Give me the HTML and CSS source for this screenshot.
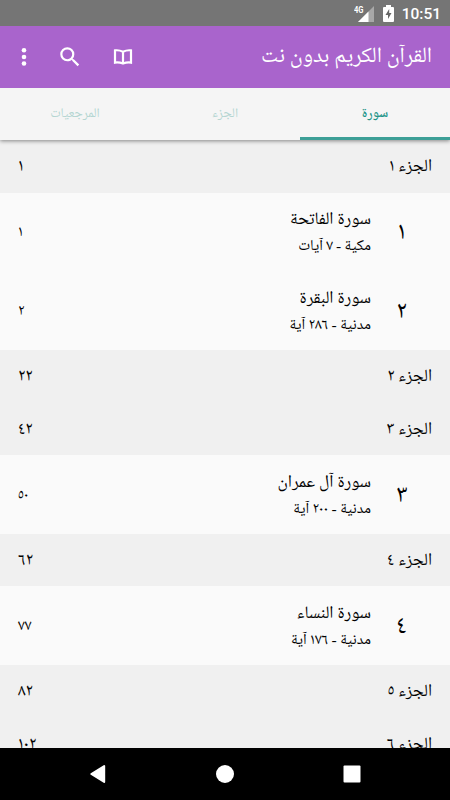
FILE: index.html
```
<!DOCTYPE html>
<html lang="ar" dir="rtl">
<head>
    <meta charset="UTF-8">
    <meta name="viewport" content="width=device-width, initial-scale=1.0">
    <title>القرآن الكريم بدون نت</title>
    <link rel="stylesheet" href="styles.css">
</head>
<body>
    <div class="status-bar" dir="ltr">
        <svg class="signal" width="21" height="18" viewBox="0 0 21 18">
            <path d="M20 1V17H4Z" fill="#a8a8a8"/>
            <path d="M14.5 6.5V17H4Z" fill="#fff"/>
            <text class="network" x="0" y="8" textLength="9.5" lengthAdjust="spacingAndGlyphs">4G</text>
        </svg>
        <svg class="battery" width="11" height="17" viewBox="0 0 11 17">
            <path d="M3 0H8V2H10Q11 2 11 3V16Q11 17 10 17H1Q0 17 0 16V3Q0 2 1 2H3Z" fill="#fff"/>
            <path d="M6.2 4L2.5 10H5V14L8.5 8H6.2Z" fill="#666"/>
        </svg>
        <span class="clock">10:51</span>
    </div>

    <header class="toolbar">
        <h1 class="title">القرآن الكريم بدون نت</h1>
        <div class="actions" dir="ltr">
            <svg class="icon-more" width="6" height="20" viewBox="0 0 6 20">
                <circle cx="3" cy="3.3" r="2.3"/>
                <circle cx="3" cy="10" r="2.3"/>
                <circle cx="3" cy="16.5" r="2.3"/>
            </svg>
            <svg class="icon-search" width="26" height="26" viewBox="0 0 24 24">
                <path d="M15.5 14h-.79l-.28-.27A6.47 6.47 0 0 0 16 9.5 6.5 6.5 0 1 0 9.5 16c1.61 0 3.09-.59 4.23-1.57l.27.28v.79l5 4.99L20.49 19l-4.99-5zm-6 0a4.5 4.5 0 1 1 0-9 4.5 4.5 0 0 1 0 9z"/>
            </svg>
            <svg class="icon-book" width="20" height="18" viewBox="0 0 20 18">
                <path d="M2 2.4Q6 1.8 10 3.8Q14 1.8 18 2.4V14.6Q14 14 10 15.6Q6 14 2 14.6ZM10 4V15"/>
            </svg>
        </div>
    </header>

    <nav class="tabs">
        <div class="tab active">سورة</div>
        <div class="tab">الجزء</div>
        <div class="tab">المرجعيات</div>
    </nav>

    <main class="list">
        <div class="juz"><span>الجزء ١</span><span class="page">١</span></div>
        <div class="surah">
            <span class="number">١</span>
            <div class="info">
                <div class="name">سورة الفاتحة</div>
                <div class="meta">مكية - ٧ آيات</div>
            </div>
            <span class="page">١</span>
        </div>
        <div class="surah">
            <span class="number">٢</span>
            <div class="info">
                <div class="name">سورة البقرة</div>
                <div class="meta">مدنية - ٢٨٦ آية</div>
            </div>
            <span class="page">٢</span>
        </div>
        <div class="juz"><span>الجزء ٢</span><span class="page">٢٢</span></div>
        <div class="juz"><span>الجزء ٣</span><span class="page">٤٢</span></div>
        <div class="surah">
            <span class="number">٣</span>
            <div class="info">
                <div class="name">سورة آل عمران</div>
                <div class="meta">مدنية - ٢٠٠ آية</div>
            </div>
            <span class="page">٥٠</span>
        </div>
        <div class="juz"><span>الجزء ٤</span><span class="page">٦٢</span></div>
        <div class="surah">
            <span class="number">٤</span>
            <div class="info">
                <div class="name">سورة النساء</div>
                <div class="meta">مدنية - ١٧٦ آية</div>
            </div>
            <span class="page">٧٧</span>
        </div>
        <div class="juz"><span>الجزء ٥</span><span class="page">٨٢</span></div>
        <div class="juz"><span>الجزء ٦</span><span class="page">١٠٢</span></div>
    </main>

    <footer class="nav-bar" dir="ltr">
        <svg width="18" height="20" viewBox="0 0 18 20"><path d="M2.3 10L15.2 2V18Z" stroke="#fff" stroke-width="2" stroke-linejoin="round"/></svg>
        <svg width="18" height="18" viewBox="0 0 18 18"><circle cx="9" cy="9" r="9"/></svg>
        <svg width="18" height="18" viewBox="0 0 18 18"><rect x=".5" y=".5" width="17" height="17" rx="1"/></svg>
    </footer>
</body>
</html>
```
FILE: styles.css
```
* {
    box-sizing: border-box;
}
body {
    margin: 0;
    width: 450px;
    height: 800px;
    overflow: hidden;
    display: flex;
    flex-direction: column;
    font-family: "Noto Naskh Arabic UI", "Noto Naskh Arabic", "Noto Sans Arabic", "DejaVu Sans", sans-serif;
    color: #000;
    background: #fafafa;
}
.status-bar {
    flex: none;
    height: 26px;
    padding-right: 9px;
    display: flex;
    align-items: center;
    justify-content: flex-end;
    background: #757575;
    color: #fff;
}
.network {
    font: bold 9.5px Roboto, sans-serif;
    fill: #fff;
}
.signal {
    margin: 1px 8px 0 0;
}
.battery {
    margin-right: 8px;
}
.clock {
    font: 500 15.5px/26px Roboto, sans-serif;
    padding-top: 2px;
}
.toolbar {
    flex: none;
    height: 61.5px;
    padding: 0 18px 0 21px;
    display: flex;
    align-items: center;
    justify-content: space-between;
    background: #a964cc;
    color: #fff;
    position: relative;
    z-index: 1;
}
.title {
    margin: 0;
    font-size: 21.9px;
    font-weight: 400;
    line-height: 30px;
}
.actions {
    display: flex;
    align-items: center;
    fill: #fff;
}
.icon-search {
    margin: 0 29.5px 0 30px;
}
.icon-book {
    fill: none;
    stroke: #fff;
    stroke-width: 2.2;
}
.tabs {
    flex: none;
    height: 52.5px;
    display: flex;
    position: relative;
    background: #f5f5f5;
    box-shadow: 0 1px 4px rgba(0, 0, 0, 0.45);
}
.tab {
    flex: 1;
    display: flex;
    align-items: center;
    justify-content: center;
    border-bottom: 3px solid transparent;
    padding-top: 3px;
    font-size: 13.4px;
    color: #b4d6d2;
}
.tab.active {
    color: #229488;
    font-weight: 600;
    border-bottom-color: #3d9f97;
}
.list {
    flex: 1;
    min-height: 0;
    overflow: hidden;
}
.juz {
    height: 52.5px;
    padding: 1px 18px 0;
    display: flex;
    align-items: center;
    justify-content: space-between;
    background: #f0f0f0;
    font-size: 17.3px;
}
.surah {
    height: 78.75px;
    padding: 1px 18px 0;
    display: flex;
    align-items: center;
}
.number {
    width: 61px;
    text-align: center;
    font-size: 25px;
}
.info {
    flex: 1;
    padding-top: 1px;
}
.name {
    font-size: 17.5px;
    line-height: 27px;
}
.meta {
    font-size: 15.3px;
    line-height: 26px;
}
.surah .page {
    font-size: 15.3px;
}
.nav-bar {
    flex: none;
    height: 52.5px;
    display: flex;
    align-items: center;
    justify-content: center;
    gap: 109px;
    background: #000;
    fill: #fff;
}
```
